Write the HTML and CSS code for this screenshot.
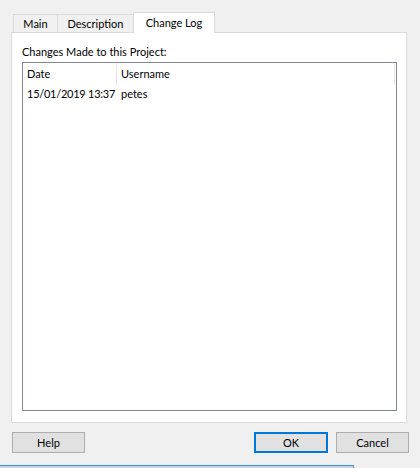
FILE: index.html
```html
<!DOCTYPE html>
<html lang="en">
<head>
  <meta charset="UTF-8" />
  <title>Project Properties - Change Log</title>
  <link rel="stylesheet" href="styles.css">
</head>
<body>
  <div class="dialog">
    <!-- Pestañas -->
    <div class="tabs">
      <div class="tab">Main</div>
      <div class="tab">Description</div>
      <div class="tab activa">Change Log</div>
    </div>

    <div class="panel">
      <div class="etiqueta">Changes Made to this Project:</div>
      <div class="lista">
        <div class="cabecera">
          <div class="col col-fecha">Date</div>
          <div class="col col-usuario">Username</div>
        </div>
        <div class="fila">
          <div class="col col-fecha fecha">15/01/2019 13:37</div>
          <div class="col col-usuario">petes</div>
        </div>
      </div>
    </div>

    <div class="botones">
      <button class="boton">Help</button>
      <div class="espacio"></div>
      <button class="boton defecto">OK</button>
      <button class="boton">Cancel</button>
    </div>
  </div>

  <div class="ventana-detras"></div>
</body>
</html>
```

FILE: styles.css
```css
html, body {
  margin: 0;
  padding: 0;
  height: 100%;
  overflow: hidden;
  background: #f0f0f0;
  font-family: Lato, "Open Sans", sans-serif;
  font-size: 11px;
  color: #000;
}

.dialog {
  padding: 12px 13px 0 11px;
  height: 453px;
  box-sizing: border-box;
}

/* Pestañas */
.tabs {
  display: flex;
  align-items: flex-end;
  height: 20px;
  padding-left: 2px;
}

.tab {
  box-sizing: border-box;
  height: 18px;
  line-height: 17px;
  border: 1px solid #d9d9d9;
  border-bottom: none;
  background: #f0f0f0;
  margin-right: -1px;
  text-align: center;
  white-space: nowrap;
}

.tab:nth-child(1) { width: 45px; }
.tab:nth-child(2) { width: 77px; }

.tab.activa {
  height: 21px;
  width: 82px;
  line-height: 19px;
  background: #fff;
  margin-bottom: -1px;
  position: relative;
  z-index: 1;
}

.panel {
  box-sizing: border-box;
  height: 391px;
  background: #fff;
  border: 1px solid #d9d9d9;
  padding: 11px 9px 11px 10px;
  display: flex;
  flex-direction: column;
}

.etiqueta {
  height: 16px;
  line-height: 16px;
  margin-bottom: 2px;
}

/* Lista */
.lista {
  flex: 1;
  border: 1px solid #828790;
  background: #fff;
}

.cabecera {
  display: flex;
  height: 22px;
  line-height: 22px;
}

.cabecera .col {
  border-right: 1px solid #e5e5e5;
}

.cabecera .col-usuario {
  flex: 1;
  margin-right: 1px;
}

.fila {
  display: flex;
  height: 20px;
  line-height: 18px;
}

.col {
  box-sizing: border-box;
  padding-left: 4px;
  white-space: nowrap;
}

.col-fecha {
  width: 94px;
}

.fecha {
  letter-spacing: -0.25px;
}

/* Botones */
.botones {
  display: flex;
  gap: 8px;
  padding-top: 9px;
  padding-left: 1px;
  margin-right: -2px;
}

.espacio {
  flex: 1;
}

.boton {
  box-sizing: border-box;
  width: 73px;
  height: 21px;
  padding: 0;
  background: #e1e1e1;
  border: 1px solid #adadad;
  font: inherit;
  color: #000;
}

.boton.defecto {
  border: 2px solid #0078d7;
  width: 74px;
}

/* Borde de la ventana de atrás */
.ventana-detras {
  margin-top: 12px;
  height: 3px;
  width: 353px;
  border-top: 1px solid #3c8fd6;
  background: #c7d5e2;
  border-right: 1px solid #8c8c8c;
}
```
